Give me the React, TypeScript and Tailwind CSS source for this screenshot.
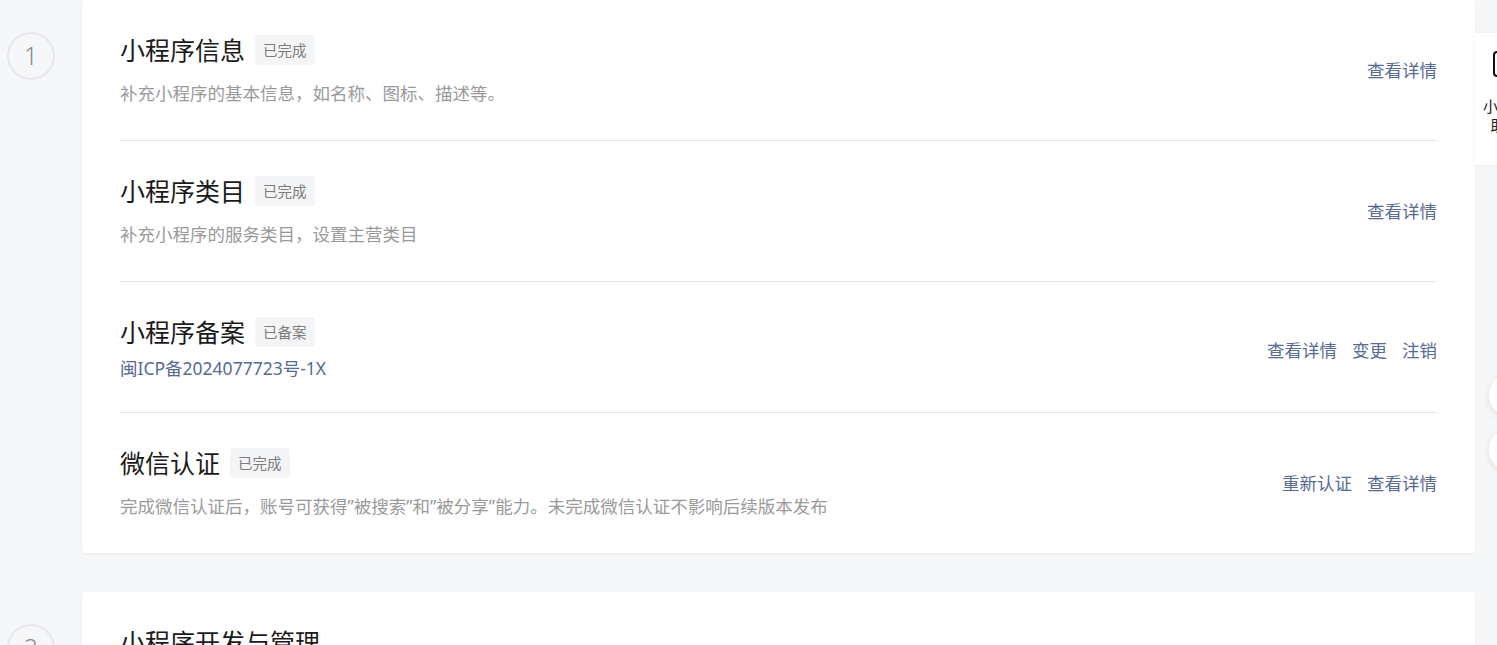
const font = { fontFamily: '"Noto Sans", "Noto Sans CJK SC", sans-serif' };

type Row = {
  title: string;
  tag: string;
  desc: string;
  descLink?: boolean;
  actions: string[];
};

const rows: Row[] = [
  { title: "小程序信息", tag: "已完成", desc: "补充小程序的基本信息，如名称、图标、描述等。", actions: ["查看详情"] },
  { title: "小程序类目", tag: "已完成", desc: "补充小程序的服务类目，设置主营类目", actions: ["查看详情"] },
  { title: "小程序备案", tag: "已备案", desc: "闽ICP备2024077723号-1X", descLink: true, actions: ["查看详情", "变更", "注销"] },
  {
    title: "微信认证",
    tag: "已完成",
    desc: "完成微信认证后，账号可获得\u201d被搜索\u201d和\u201d被分享\u201d能力。未完成微信认证不影响后续版本发布",
    actions: ["重新认证", "查看详情"],
  },
];

function StepCircle({ n }: { n: number }) {
  return (
    <div className="mt-[32px] flex h-[48px] w-[48px] shrink-0 items-center justify-center rounded-full border-2 border-[#e6e7ea] text-[25px] font-light text-[#8a8a8a]">
      {n}
    </div>
  );
}

function InfoRow({ row, last }: { row: Row; last: boolean }) {
  let pad = "pt-[34px] pb-[35px] border-b border-[#e7e7e7]";
  if (row.descLink) pad = "pt-[34px] pb-[32px] border-b border-[#e7e7e7]";
  if (last) pad = "pt-[34px] pb-[35px]";
  return (
    <div className={"flex items-center justify-between " + pad}>
      <div>
        <div className="flex items-center">
          <span className="text-[25px] leading-[32px] text-[#1a1a1a]">{row.title}</span>
          <span className="ml-[10px] rounded-[3px] bg-[#f4f5f7] px-[8px] text-[14.5px] leading-[30px] text-[#7c7c7c]">
            {row.tag}
          </span>
        </div>
        <div
          className={
            row.descLink
              ? "mt-[8px] text-[17.5px] leading-[24px] text-[#576b95]"
              : "mt-[15px] text-[17.5px] leading-[24px] text-[#9a9a9a]"
          }
        >
          {row.desc}
        </div>
      </div>
      <div
        className={
          "flex gap-[15px] text-[17.5px] leading-[24px] text-[#576b95] " +
          (row.descLink ? "pt-[4px]" : "")
        }
      >
        {row.actions.map((a) => (
          <span key={a}>{a}</span>
        ))}
      </div>
    </div>
  );
}

export default function App() {
  return (
    <div className="relative h-[645px] overflow-hidden bg-[#f6f7f9]" style={font}>
      <div className="flex flex-col gap-[39px]">
        {/* STEP 1 */}
        <div className="flex gap-[27px] pl-[7px] pr-[22px]">
          <StepCircle n={1} />
          <div className="flex-1 rounded-[4px] bg-white px-[38px] shadow-[0_1px_3px_rgba(0,0,0,0.06)]">
            {rows.map((r, i) => (
              <InfoRow key={r.title} row={r} last={i === rows.length - 1} />
            ))}
          </div>
        </div>

        {/* STEP 2 */}
        <div className="flex gap-[27px] pl-[7px] pr-[22px]">
          <StepCircle n={2} />
          <div className="flex-1 rounded-[4px] bg-white px-[38px] pt-[34px] pb-[40px] shadow-[0_1px_3px_rgba(0,0,0,0.06)]">
            <span className="text-[25px] leading-[32px] text-[#1a1a1a]">小程序开发与管理</span>
          </div>
        </div>
      </div>

      {/* floating helper panel */}
      <div className="absolute left-[1475px] top-[33px] flex h-[132px] w-[61px] flex-col items-center bg-white pt-[18px] shadow-[0_0_4px_rgba(0,0,0,0.06)]">
        <svg width="26" height="26" viewBox="0 0 26 26" fill="none" stroke="#111" strokeWidth="2">
          <rect x="1" y="1" width="24" height="24" rx="3" />
          <path d="M7 9h12M7 14h8" />
        </svg>
        <div className="mt-[20px] flex flex-col items-center text-[15px] leading-[19px] text-[#222]">
          <span>小程序</span>
          <span>助手</span>
        </div>
      </div>

      {/* floating round buttons */}
      <div className="absolute left-[1489px] top-[373px] h-[44px] w-[44px] rounded-full bg-white shadow-[0_2px_8px_rgba(0,0,0,0.1)]" />
      <div className="absolute left-[1489px] top-[428px] h-[44px] w-[44px] rounded-full bg-white shadow-[0_2px_8px_rgba(0,0,0,0.1)]" />
    </div>
  );
}
